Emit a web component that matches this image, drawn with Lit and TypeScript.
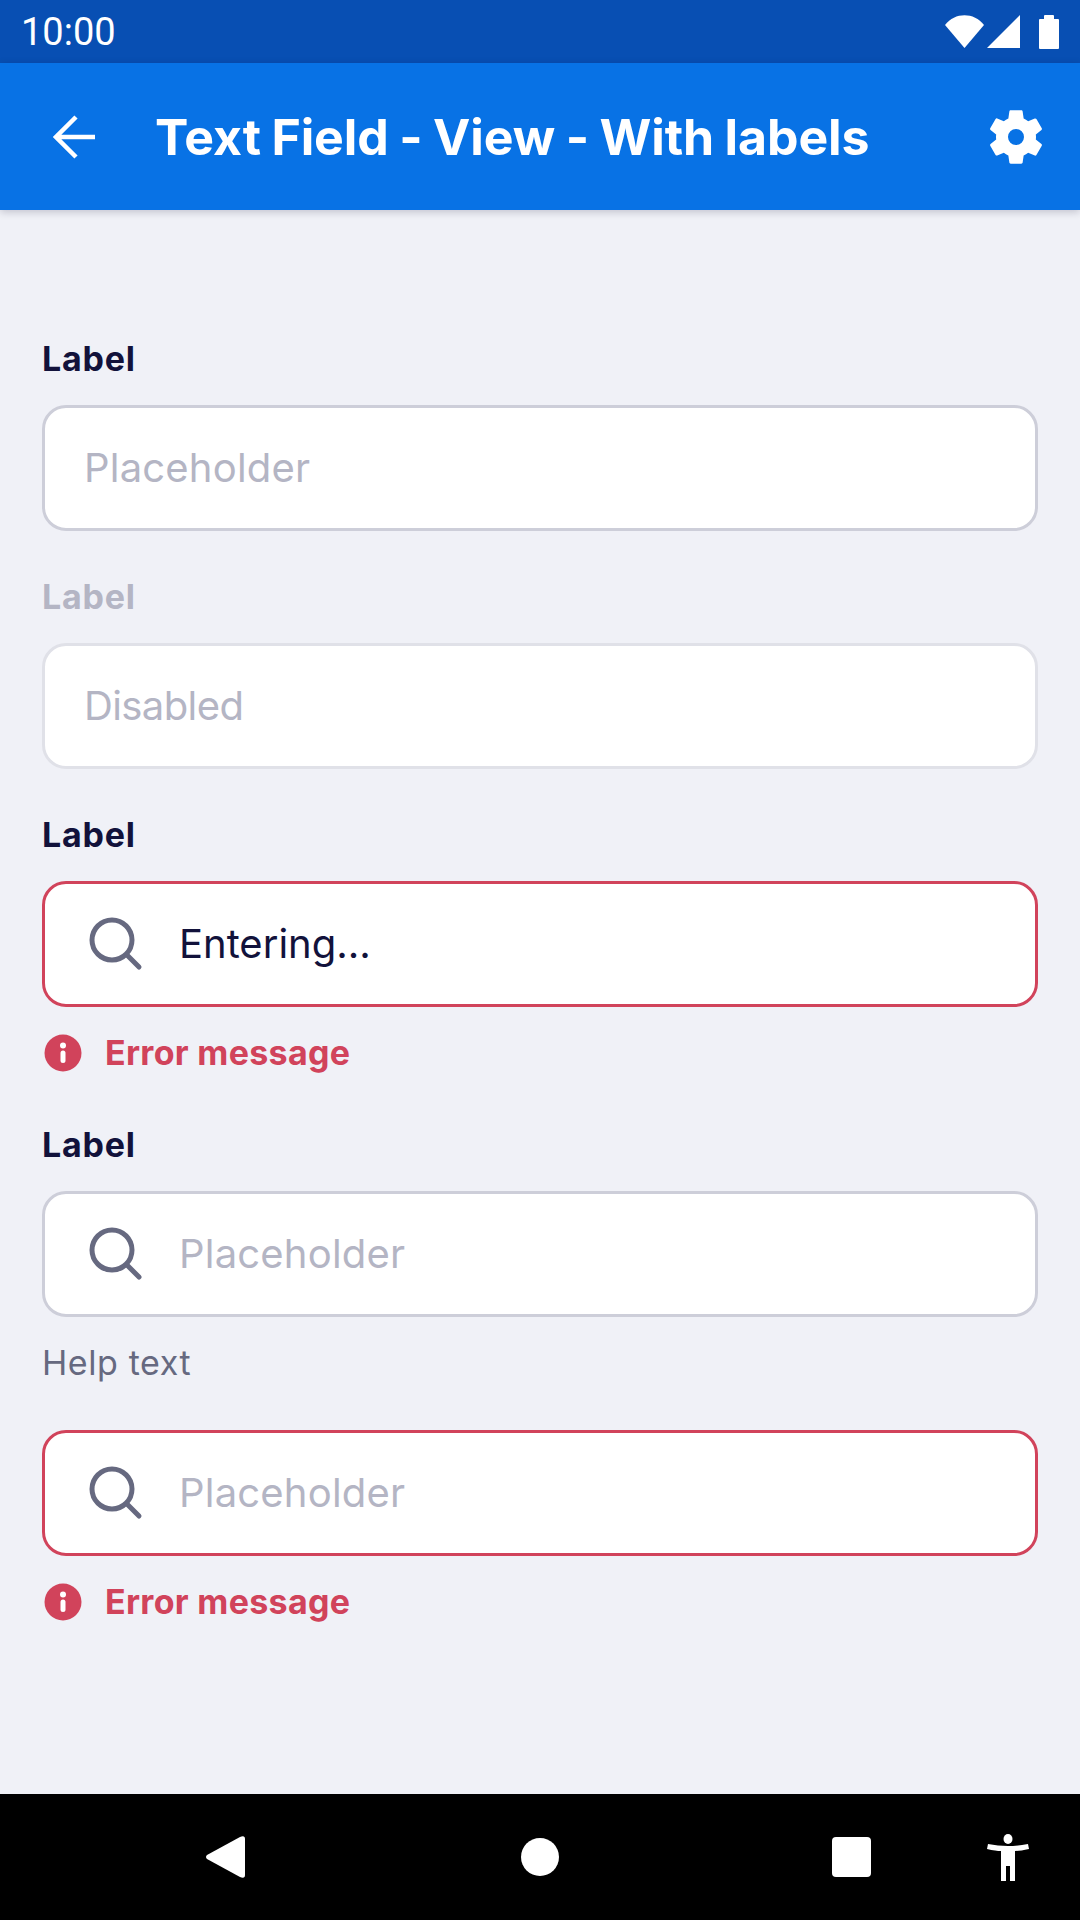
import { LitElement, html, css, nothing } from "lit";
import { customElement } from "lit/decorators.js";

const searchIcon = html`<svg class="search" viewBox="0 0 54 54" width="54" height="54">
    <circle cx="23" cy="23" r="20" fill="none" stroke="#666980" stroke-width="5"></circle>
    <path d="M38 38 L50 50" fill="none" stroke="#666980" stroke-width="5" stroke-linecap="round"></path>
</svg>`;

const infoIcon = html`<svg class="info" viewBox="0 0 38 38" width="38" height="38">
    <circle cx="19" cy="19" r="18.5" fill="#d1435b"></circle>
    <circle cx="19" cy="11.5" r="3" fill="#fff"></circle>
    <rect x="16.5" y="16.5" width="5" height="12.5" rx="2.5" fill="#fff"></rect>
</svg>`;

interface Field {
    label?: string;
    labelClass?: string;
    text: string;
    kind: "placeholder" | "disabled" | "value";
    search?: boolean;
    error?: boolean;
    help?: string;
}

const fields: Field[] = [
    { label: "Label", text: "Placeholder", kind: "placeholder" },
    { label: "Label", labelClass: "off", text: "Disabled", kind: "disabled" },
    { label: "Label", text: "Entering...", kind: "value", search: true, error: true },
    { label: "Label", text: "Placeholder", kind: "placeholder", search: true, help: "Help text" },
    { text: "Placeholder", kind: "placeholder", search: true, error: true },
];

@customElement("app-root")
export class AppRoot extends LitElement {
    static override styles = css`
        :host {
            display: flex;
            flex-direction: column;
            width: 1080px;
            height: 1920px;
            background: #f0f1f7;
            font-family: Inter, "Noto Sans", sans-serif;
            color: #12123b;
            overflow: hidden;
        }

        .status {
            height: 63px;
            flex: none;
            display: flex;
            align-items: center;
            justify-content: space-between;
            padding: 0 21px;
            background: #084fb3;
            color: #fff;
            font-family: Roboto, sans-serif;
            font-size: 38px;
        }

        .appbar {
            height: 147px;
            flex: none;
            display: flex;
            align-items: center;
            background: #0872e5;
            box-shadow: 0 2px 8px rgba(0, 0, 40, 0.2);
            color: #fff;
            position: relative;
        }

        .back {
            margin-left: 53px;
            flex: none;
        }

        .title {
            margin-left: 58px;
            flex: 1;
            font-size: 50px;
            font-weight: 700;
            letter-spacing: -0.1px;
            word-spacing: -1.2px;
            white-space: nowrap;
        }

        .gear {
            margin-right: 32px;
            flex: none;
        }

        main {
            flex: 1;
            padding: 130px 42px 0;
            display: flex;
            flex-direction: column;
        }

        .field {
            display: flex;
            flex-direction: column;
        }

        .label {
            height: 65px;
            font-size: 34px;
            font-weight: 700;
            line-height: 38px;
            letter-spacing: 0.8px;
        }

        .label.off {
            color: #b4b5c4;
        }

        .box {
            height: 126px;
            box-sizing: border-box;
            display: flex;
            align-items: center;
            gap: 36px;
            padding: 0 39px;
            background: #fff;
            border: 3px solid #cdced9;
            border-radius: 24px;
            font-size: 40px;
        }

        .box span {
            padding-bottom: 2px;
        }

        .box.disabled {
            border-color: #e0e1e8;
        }

        .box.disabled span {
            letter-spacing: -0.6px;
        }

        .box.error {
            border-color: #d1435b;
        }

        .box.icon {
            padding-left: 44px;
        }

        .search {
            flex: none;
        }

        .placeholder {
            color: #b4b5c4;
            letter-spacing: 0.2px;
        }

        .below {
            box-sizing: border-box;
            display: flex;
            align-items: center;
        }

        .plain {
            height: 47px;
        }

        .err {
            height: 119px;
            color: #d1435b;
            font-size: 34px;
            font-weight: 700;
            letter-spacing: 0.3px;
            gap: 23px;
            padding: 0 0 28px 2px;
        }

        .help {
            height: 113px;
            color: #666980;
            font-size: 34px;
            letter-spacing: 0.6px;
            padding-bottom: 23px;
        }

        .nav {
            height: 126px;
            flex: none;
            background: #000;
            display: block;
        }
    `;

    private renderField (f: Field) {
        const boxClass = ["box", f.error ? "error" : "", f.kind === "disabled" ? "disabled" : "", f.search ? "icon" : ""].join(" ");
        const textClass = f.kind === "value" ? "" : "placeholder";
        return html`
            <div class="field">
                ${f.label ? html`<div class="label ${f.labelClass ?? ""}">${f.label}</div>` : nothing}
                <div class="${boxClass}">
                    ${f.search ? searchIcon : nothing}
                    <span class="${textClass}">${f.text}</span>
                </div>
                ${f.error
                    ? html`<div class="below err">${infoIcon}<span>Error message</span></div>`
                    : f.help
                        ? html`<div class="below help">${f.help}</div>`
                        : html`<div class="plain"></div>`}
            </div>
        `;
    }

    override render () {
        return html`
            <div class="status">
                <span>10:00</span>
                <svg width="114" height="34" viewBox="0 0 114 34">
                    <path d="M0 10 C10 -3 29 -3 39 10 L19.5 33 Z" fill="#fff"></path>
                    <path d="M42 33 L75 0 V33 Z" fill="#fff"></path>
                    <path d="M94 5 Q94 4 95 4 H99 V1 Q99 0 100 0 H108 Q109 0 109 1 V4 H113 Q114 4 114 5 V33 Q114 34 113 34 H95 Q94 34 94 33 Z" fill="#fff"></path>
                </svg>
            </div>
            <header class="appbar">
                <svg class="back" width="44" height="44" viewBox="0 0 44 44">
                    <path d="M42 22 H3 M23 2 L3 22 L23 42" fill="none" stroke="#fff" stroke-width="4.5"></path>
                </svg>
                <div class="title">Text Field - View - With labels</div>
                <svg class="gear" width="64" height="64" viewBox="0 0 24 24">
                    <path fill="#fff" fill-rule="evenodd" d="M19.43 12.98c.04-.32.07-.64.07-.98s-.03-.66-.07-.98l2.11-1.65c.19-.15.24-.42.12-.64l-2-3.46c-.12-.22-.39-.3-.61-.22l-2.49 1c-.52-.4-1.08-.73-1.69-.98l-.38-2.65C14.46 2.18 14.25 2 14 2h-4c-.25 0-.46.18-.49.42l-.38 2.65c-.61.25-1.17.59-1.69.98l-2.49-1c-.23-.09-.49 0-.61.22l-2 3.46c-.13.22-.07.49.12.64l2.11 1.65c-.04.32-.07.65-.07.98s.03.66.07.98l-2.11 1.65c-.19.15-.24.42-.12.64l2 3.46c.12.22.39.3.61.22l2.49-1c.52.4 1.08.73 1.69.98l.38 2.65c.03.24.24.42.49.42h4c.25 0 .46-.18.49-.42l.38-2.65c.61-.25 1.17-.59 1.69-.98l2.49 1c.23.09.49 0 .61-.22l2-3.46c.12-.22.07-.49-.12-.64l-2.11-1.65zM12 15a3 3 0 1 1 0-6 3 3 0 0 1 0 6z"></path>
                </svg>
            </header>
            <main>
                ${fields.map((f) => this.renderField(f))}
            </main>
            <svg class="nav" width="1080" height="126" viewBox="0 0 1080 126">
                <path d="M207 65 Q205 63 207 61 L240 43 Q245 41 245 45 V81 Q245 85 240 83 Z" fill="#fff"></path>
                <circle cx="540" cy="63" r="19" fill="#fff"></circle>
                <rect x="832" y="43" width="39" height="40" rx="4" fill="#fff"></rect>
                <ellipse cx="1008" cy="45" rx="4.5" ry="5" fill="#fff"></ellipse>
                <path d="M988 50 Q1008 54 1028 50 L1029 55 Q1020 57 1015 57 V87 H1010 V72 H1006 V87 H1001 V57 Q996 57 987 55 Z" fill="#fff"></path>
            </svg>
        `;
    }
}
